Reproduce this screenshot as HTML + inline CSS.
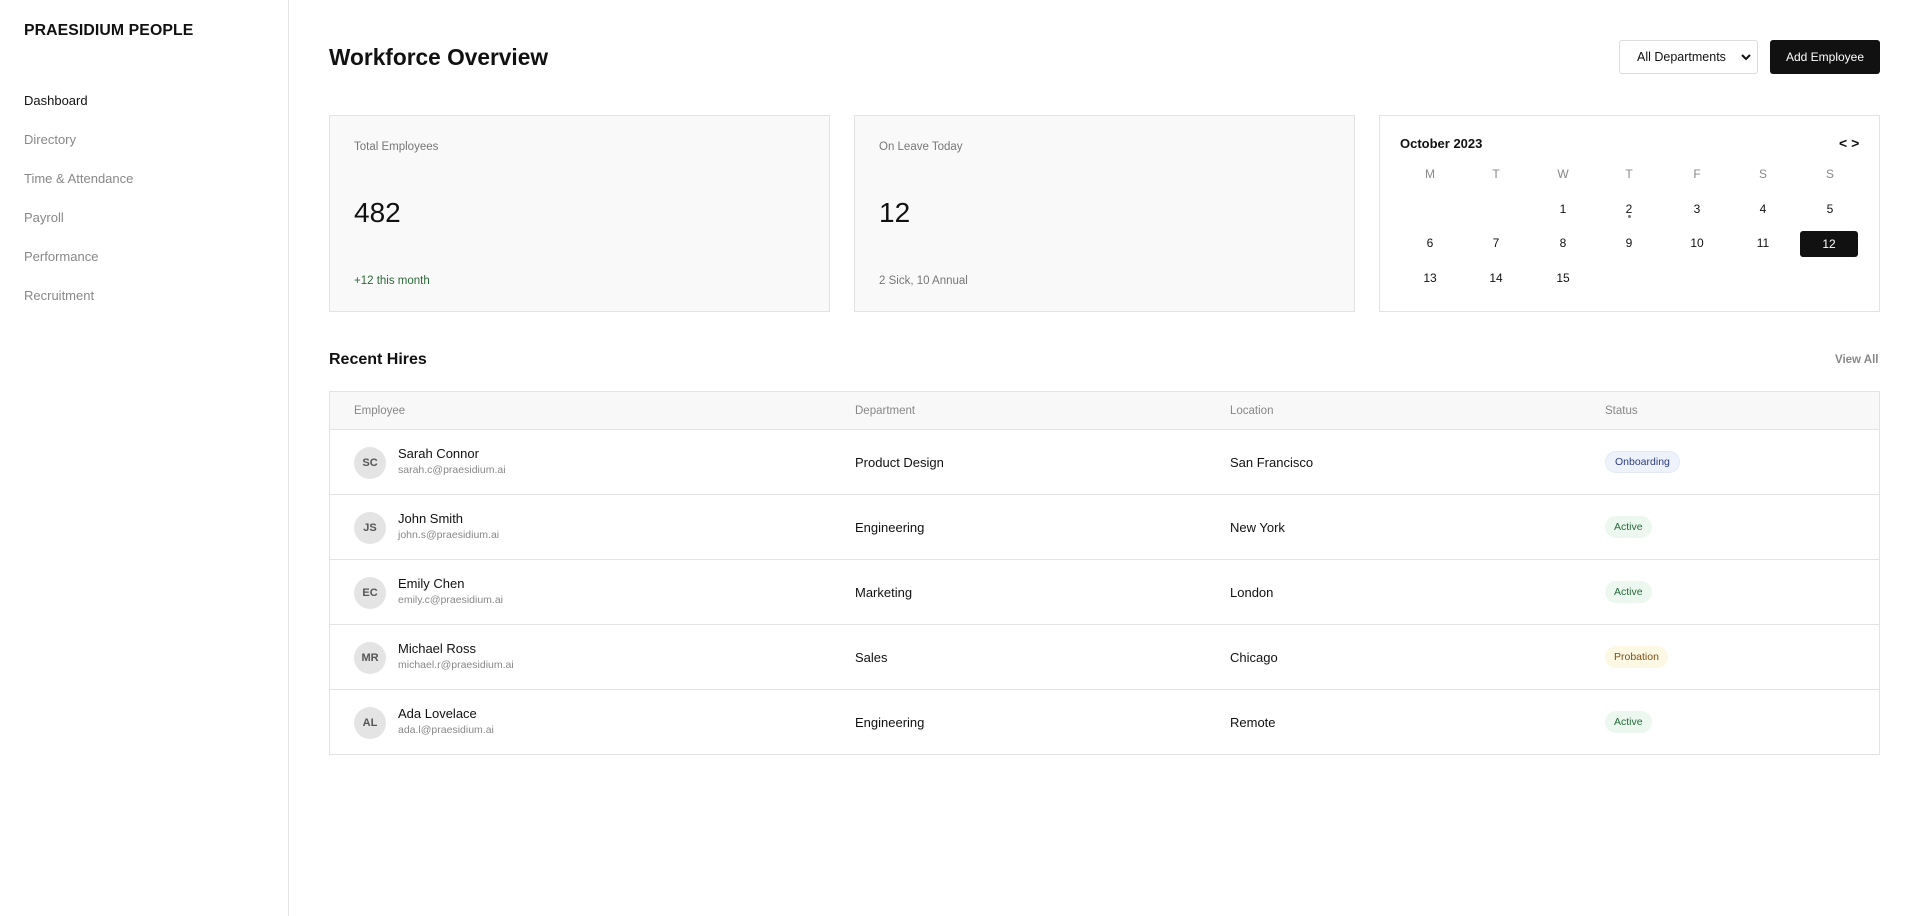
<!DOCTYPE html>
<html><head><meta charset="utf-8"><style>
*{box-sizing:border-box;margin:0;padding:0}
body{width:1918px;height:916px;background:#fff;font-family:"Liberation Sans",Arial,sans-serif;color:#111;position:relative;overflow:hidden}
.a{position:absolute;white-space:nowrap}
.side{position:absolute;left:0;top:0;width:289px;height:916px;border-right:1px solid #e5e5e5}
.brand{left:24px;top:22px;font-size:15.8px;font-weight:bold;letter-spacing:.1px}
.nav{left:24px;font-size:13px;color:#888}
.card{position:absolute;top:115px;height:197px;border:1px solid #e3e3e3;background:#f9f9f9}
.lbl{font-size:11.5px;color:#777}
.num{font-size:28px;color:#111}
.cal{position:absolute;left:1379px;top:115px;width:501px;height:197px;border:1px solid #e3e3e3;background:#fff}
.c{position:absolute;width:40px;margin-left:-20px;text-align:center;font-size:12px}
.wd{color:#888}
.tbl{position:absolute;left:329px;top:391px;width:1551px;height:364px;border:1px solid #e3e3e3}
.hd{position:absolute;left:0;top:0;width:100%;height:38px;background:#f8f8f8;border-bottom:1px solid #e3e3e3}
.row{position:absolute;left:0;width:100%;height:65px;border-bottom:1px solid #e3e3e3}
.th{font-size:11.5px;color:#888;top:13px}
.td{font-size:13px;top:25px}
.av{position:absolute;left:24px;top:17px;width:32px;height:32px;border-radius:50%;background:#e4e4e4;color:#555;font-size:11px;font-weight:bold;text-align:center;line-height:32px}
.nm{left:68px;top:16px;font-size:13px}
.em{left:68px;top:34px;font-size:10.5px;color:#888}
.bd{top:21px;left:1275px;height:22px;line-height:22px;padding:0 9px;border-radius:11px;font-size:10.5px}
.on{background:#eef2fb;color:#2c3d80;border:1px solid #e3e8f5;line-height:20px}
.ac{background:#ecf8ef;color:#276a3c}
.pr{background:#fdf8e3;color:#7a4f1a}
</style></head><body>
<div class="side"></div>
<div class="a brand">PRAESIDIUM PEOPLE</div>
<div class="a nav" style="top:93px;color:#111">Dashboard</div>
<div class="a nav" style="top:132px">Directory</div>
<div class="a nav" style="top:171px">Time &amp; Attendance</div>
<div class="a nav" style="top:210px">Payroll</div>
<div class="a nav" style="top:249px">Performance</div>
<div class="a nav" style="top:288px">Recruitment</div>

<div class="a" style="left:329px;top:44px;font-size:22.7px;font-weight:bold">Workforce Overview</div>
<div class="a" style="left:1619px;top:40px;width:139px;height:34px;border:1px solid #ddd;border-radius:3px;font-size:12.5px;line-height:32px;padding-left:17px">All Departments<svg style="position:absolute;right:6px;top:12px" width="10" height="8"><path d="M1 2l4 4 4-4" stroke="#111" stroke-width="2" fill="none"/></svg></div>
<div class="a" style="left:1770px;top:40px;width:110px;height:34px;background:#111;color:#fff;border-radius:3px;font-size:12px;line-height:34px;text-align:center">Add Employee</div>

<div class="card" style="left:329px;width:501px">
<div class="a lbl" style="left:24px;top:25px">Total Employees</div>
<div class="a num" style="left:24px;top:81px">482</div>
<div class="a" style="left:24px;top:159px;font-size:11.5px;color:#2d6a3a">+12 this month</div>
</div>
<div class="card" style="left:854px;width:501px">
<div class="a lbl" style="left:24px;top:25px">On Leave Today</div>
<div class="a num" style="left:24px;top:81px">12</div>
<div class="a lbl" style="left:24px;top:159px">2 Sick, 10 Annual</div>
</div>
<div class="cal">
<div class="a" style="left:20px;top:20px;font-size:13px;font-weight:bold">October 2023</div>
<div class="a" style="left:459px;top:19px;font-size:14px;font-weight:bold">&lt; &gt;</div>
</div>
<div class="c wd" style="left:1430px;top:167px">M</div>
<div class="c wd" style="left:1496px;top:167px">T</div>
<div class="c wd" style="left:1563px;top:167px">W</div>
<div class="c wd" style="left:1629px;top:167px">T</div>
<div class="c wd" style="left:1697px;top:167px">F</div>
<div class="c wd" style="left:1763px;top:167px">S</div>
<div class="c wd" style="left:1830px;top:167px">S</div>
<div class="c" style="left:1563px;top:202px">1</div>
<div class="c" style="left:1629px;top:202px">2<div style="width:3px;height:3px;border-radius:50%;background:#777;margin:-1px auto 0"></div></div>
<div class="c" style="left:1697px;top:202px">3</div>
<div class="c" style="left:1763px;top:202px">4</div>
<div class="c" style="left:1830px;top:202px">5</div>
<div class="c" style="left:1430px;top:236px">6</div>
<div class="c" style="left:1496px;top:236px">7</div>
<div class="c" style="left:1563px;top:236px">8</div>
<div class="c" style="left:1629px;top:236px">9</div>
<div class="c" style="left:1697px;top:236px">10</div>
<div class="c" style="left:1763px;top:236px">11</div>
<div class="a" style="left:1800px;top:231px;width:58px;height:26px;background:#111;border-radius:3px;color:#fff;font-size:12px;text-align:center;line-height:26px">12</div>
<div class="c" style="left:1430px;top:271px">13</div>
<div class="c" style="left:1496px;top:271px">14</div>
<div class="c" style="left:1563px;top:271px">15</div>

<div class="a" style="left:329px;top:351px;font-size:16px;font-weight:bold">Recent Hires</div>
<div class="a" style="left:1835px;top:354px;font-size:11.5px;font-weight:bold;color:#888">View All</div>

<div class="tbl">
<div class="hd">
<div class="a th" style="left:24px">Employee</div>
<div class="a th" style="left:525px">Department</div>
<div class="a th" style="left:900px">Location</div>
<div class="a th" style="left:1275px">Status</div>
</div>
<div class="row" style="top:38px"><div class="av">SC</div><div class="a nm">Sarah Connor</div><div class="a em">sarah.c@praesidium.ai</div><div class="a td" style="left:525px">Product Design</div><div class="a td" style="left:900px">San Francisco</div><div class="a bd on">Onboarding</div></div>
<div class="row" style="top:103px"><div class="av">JS</div><div class="a nm">John Smith</div><div class="a em">john.s@praesidium.ai</div><div class="a td" style="left:525px">Engineering</div><div class="a td" style="left:900px">New York</div><div class="a bd ac">Active</div></div>
<div class="row" style="top:168px"><div class="av">EC</div><div class="a nm">Emily Chen</div><div class="a em">emily.c@praesidium.ai</div><div class="a td" style="left:525px">Marketing</div><div class="a td" style="left:900px">London</div><div class="a bd ac">Active</div></div>
<div class="row" style="top:233px"><div class="av">MR</div><div class="a nm">Michael Ross</div><div class="a em">michael.r@praesidium.ai</div><div class="a td" style="left:525px">Sales</div><div class="a td" style="left:900px">Chicago</div><div class="a bd pr">Probation</div></div>
<div class="row" style="top:298px;border-bottom:none"><div class="av">AL</div><div class="a nm">Ada Lovelace</div><div class="a em">ada.l@praesidium.ai</div><div class="a td" style="left:525px">Engineering</div><div class="a td" style="left:900px">Remote</div><div class="a bd ac">Active</div></div>
</div>
</body></html>
